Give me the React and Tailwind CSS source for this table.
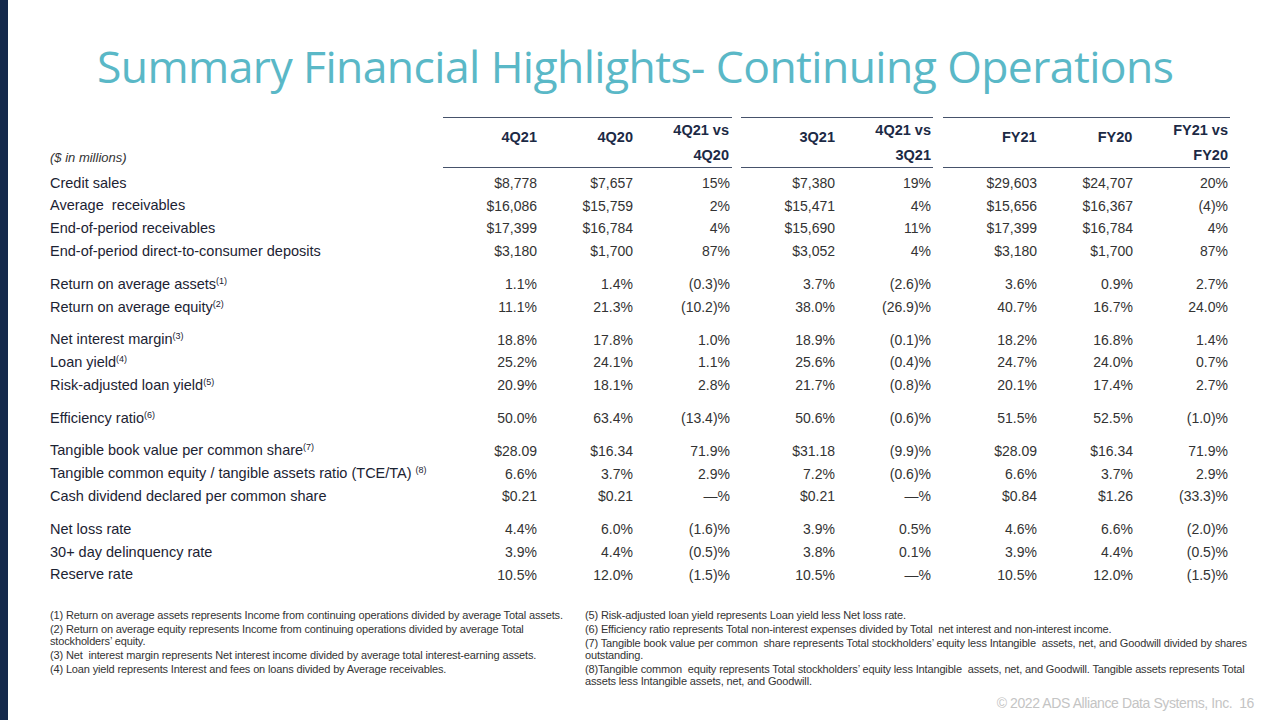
import React from 'react';

const groups = [
  [
    ['Credit sales', '', '$8,778', '$7,657', '15%', '$7,380', '19%', '$29,603', '$24,707', '20%'],
    ['Average  receivables', '', '$16,086', '$15,759', '2%', '$15,471', '4%', '$15,656', '$16,367', '(4)%'],
    ['End-of-period receivables', '', '$17,399', '$16,784', '4%', '$15,690', '11%', '$17,399', '$16,784', '4%'],
    ['End-of-period direct-to-consumer deposits', '', '$3,180', '$1,700', '87%', '$3,052', '4%', '$3,180', '$1,700', '87%'],
  ],
  [
    ['Return on average assets', '(1)', '1.1%', '1.4%', '(0.3)%', '3.7%', '(2.6)%', '3.6%', '0.9%', '2.7%'],
    ['Return on average equity', '(2)', '11.1%', '21.3%', '(10.2)%', '38.0%', '(26.9)%', '40.7%', '16.7%', '24.0%'],
  ],
  [
    ['Net interest margin', '(3)', '18.8%', '17.8%', '1.0%', '18.9%', '(0.1)%', '18.2%', '16.8%', '1.4%'],
    ['Loan yield', '(4)', '25.2%', '24.1%', '1.1%', '25.6%', '(0.4)%', '24.7%', '24.0%', '0.7%'],
    ['Risk-adjusted loan yield', '(5)', '20.9%', '18.1%', '2.8%', '21.7%', '(0.8)%', '20.1%', '17.4%', '2.7%'],
  ],
  [
    ['Efficiency ratio', '(6)', '50.0%', '63.4%', '(13.4)%', '50.6%', '(0.6)%', '51.5%', '52.5%', '(1.0)%'],
  ],
  [
    ['Tangible book value per common share', '(7)', '$28.09', '$16.34', '71.9%', '$31.18', '(9.9)%', '$28.09', '$16.34', '71.9%'],
    ['Tangible common equity / tangible assets ratio (TCE/TA) ', '(8)', '6.6%', '3.7%', '2.9%', '7.2%', '(0.6)%', '6.6%', '3.7%', '2.9%'],
    ['Cash dividend declared per common share', '', '$0.21', '$0.21', '—%', '$0.21', '—%', '$0.84', '$1.26', '(33.3)%'],
  ],
  [
    ['Net loss rate', '', '4.4%', '6.0%', '(1.6)%', '3.9%', '0.5%', '4.6%', '6.6%', '(2.0)%'],
    ['30+ day delinquency rate', '', '3.9%', '4.4%', '(0.5)%', '3.8%', '0.1%', '3.9%', '4.4%', '(0.5)%'],
    ['Reserve rate', '', '10.5%', '12.0%', '(1.5)%', '10.5%', '—%', '10.5%', '12.0%', '(1.5)%'],
  ],
];

// header groups: each column is one or two lines
const headerGroups = [
  { w: 'w-[289px]', cols: [['4Q21'], ['4Q20'], ['4Q21 vs', '4Q20']] },
  { w: 'w-[192px]', cols: [['3Q21'], ['4Q21 vs', '3Q21']] },
  { w: 'w-[287px]', cols: [['FY21'], ['FY20'], ['FY21 vs', 'FY20']] },
];

const HeaderCell = ({ lines }) => (
  <div className="w-[96px] h-full flex flex-col justify-center items-end pr-[2px]">
    {lines.length === 1 ? (
      <span className="pb-[9px]">{lines[0]}</span>
    ) : (
      <>
        <span className="leading-[25px]">{lines[0]}</span>
        <span className="leading-[25px]">{lines[1]}</span>
      </>
    )}
  </div>
);

const Val = ({ v, w = 'w-[96px]' }) => (
  <div className={`${w} text-right pr-[2px] whitespace-nowrap`}>{v}</div>
);

const DataRow = ({ row }) => {
  const [label, sup, ...vals] = row;
  return (
    <div className="flex items-center h-[22.8px]">
      <div className="w-[393px] text-[14.5px] text-[#1c2333] whitespace-pre">
        {label}
        {sup && <sup className="text-[9px] top-[-5px]">{sup}</sup>}
      </div>
      <div className="flex w-[289px] text-[#333]">
        <Val v={vals[0]} />
        <Val v={vals[1]} />
        <Val v={vals[2]} w="w-[97px]" />
      </div>
      <div className="w-[9px]" />
      <div className="flex w-[192px] text-[#333]">
        <Val v={vals[3]} />
        <Val v={vals[4]} />
      </div>
      <div className="w-[10px]" />
      <div className="flex w-[287px] text-[#333]">
        <Val v={vals[5]} />
        <Val v={vals[6]} />
        <Val v={vals[7]} w="w-[95px]" />
      </div>
    </div>
  );
};

const notesLeft = [
  ['(1) Return on average assets represents Income from continuing operations divided by average Total assets.'],
  ['(2) Return on average equity represents Income from continuing operations divided by average Total', 'stockholders’ equity.'],
  ['(3) Net  interest margin represents Net interest income divided by average total interest-earning assets.'],
  ['(4) Loan yield represents Interest and fees on loans divided by Average receivables.'],
];

const notesRight = [
  ['(5) Risk-adjusted loan yield represents Loan yield less Net loss rate.'],
  ['(6) Efficiency ratio represents Total non-interest expenses divided by Total  net interest and non-interest income.'],
  ['(7) Tangible book value per common  share represents Total stockholders’ equity less Intangible  assets, net, and Goodwill divided by shares', 'outstanding.'],
  ['(8)Tangible common  equity represents Total stockholders’ equity less Intangible  assets, net, and Goodwill. Tangible assets represents Total', 'assets less Intangible assets, net, and Goodwill.'],
];

const Notes = ({ items, w }) => (
  <div className={`${w} flex flex-col gap-[2px]`}>
    {items.map((lines, i) => (
      <p key={i} className="leading-[12px]">
        {lines.map((l, j) => (
          <span key={j} className="block whitespace-pre">{l}</span>
        ))}
      </p>
    ))}
  </div>
);

export default function App() {
  return (
    <div className="w-[1280px] h-[720px] bg-white flex overflow-hidden font-['Liberation_Sans',Arial,sans-serif]">
      {/* left bar */}
      <div className="w-[8px] h-full bg-[#14294b]" />

      <div className="flex-1 flex flex-col">
        {/* title */}
        <h1 className="pl-[89px] pt-[37px] h-[110px] text-[44.5px] leading-[58px] text-[#5ab8c7] font-['Open_Sans',sans-serif] tracking-[-0.6px] whitespace-nowrap">
          Summary Financial Highlights- Continuing Operations
        </h1>

        {/* table */}
        <div className="pl-[42px] pt-[7px] text-[14px]">
          <div className="flex h-[51px] items-stretch">
            <div className="w-[393px] flex items-end pb-[1px] text-[13px] italic text-[#333]">($ in millions)</div>
            {headerGroups.map((g, gi) => (
              <React.Fragment key={gi}>
                {gi > 0 && <div className={gi === 1 ? 'w-[9px]' : 'w-[10px]'} />}
                <div className={`${g.w} flex border-y-[1.5px] border-[#46526b] text-[14.5px] font-bold text-[#1c2a45]`}>
                  {g.cols.map((c, ci) => (
                    <HeaderCell key={ci} lines={c} />
                  ))}
                </div>
              </React.Fragment>
            ))}
          </div>

          <div className="pt-[4px] flex flex-col gap-[10px]">
            {groups.map((g, gi) => (
              <div key={gi} className="flex flex-col">
                {g.map((r, ri) => (
                  <DataRow key={ri} row={r} />
                ))}
              </div>
            ))}
          </div>
        </div>

        {/* footnotes */}
        <div className="pl-[42px] pt-[22px] flex gap-[15px] text-[11px] tracking-[-0.15px] text-[#333]">
          <Notes items={notesLeft} w="w-[520px]" />
          <Notes items={notesRight} w="w-[670px]" />
        </div>

        {/* footer */}
        <div className="mt-auto pb-[6px] pr-[26px] text-right text-[14px] tracking-[-0.4px] text-[#c4c4c4] whitespace-pre">
          © 2022 ADS Alliance Data Systems, Inc.  16
        </div>
      </div>
    </div>
  );
}
